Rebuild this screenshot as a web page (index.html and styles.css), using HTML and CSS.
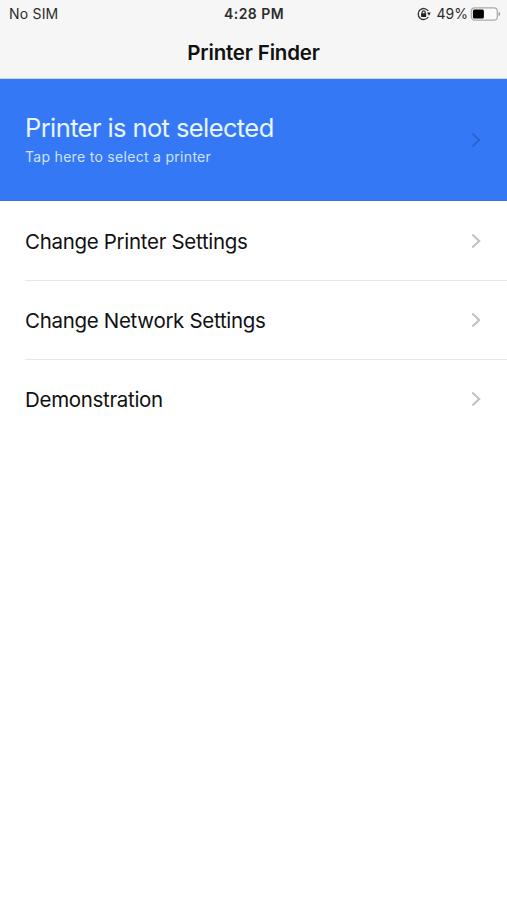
FILE: index.html
```html
<!DOCTYPE html>
<html lang="en">
<head>
<meta charset="utf-8">
<title>Printer Finder</title>
<link rel="stylesheet" href="styles.css">
</head>
<body>
<header class="header">
  <div class="status">
    <span class="carrier">No SIM</span>
    <span class="clock">4:28 PM</span>
    <span class="indicators">
      <svg class="lock" width="14" height="14" viewBox="0 0 14 14" fill="none" stroke="#333" stroke-width="1.3">
        <path d="M11.3 10A5.5 5.5 0 1 1 11.3 4"/>
        <path d="M10 5.6h3.8L12 8.8z" fill="#222" stroke="none"/>
        <path d="M5.1 6.7V5.5a1.55 1.55 0 0 1 3.1 0v1.2"/>
        <rect x="4.1" y="6.2" width="5.1" height="3.8" rx=".5" fill="#222" stroke="none"/>
      </svg>
      <span class="percent">49%</span>
      <svg class="battery" width="31" height="14" viewBox="0 0 31 14">
        <rect x="1.3" y=".9" width="26" height="12.2" rx="3.4" fill="#fafafa" stroke="#aaa" stroke-width="1.2"/>
        <rect x="2.9" y="2.4" width="11" height="9.2" rx="1.6" fill="#000"/>
        <path d="M28.6 4.8c2.1.8 2.1 3.6 0 4.4z" fill="#999"/>
      </svg>
    </span>
  </div>
  <h1 class="title">Printer Finder</h1>
</header>
<main>
  <a class="banner">
    <span class="banner-text">
      <span class="banner-title">Printer is not selected</span>
      <span class="banner-sub">Tap here to select a printer</span>
    </span>
    <svg class="chevron chevron-dark" width="10" height="16" viewBox="0 0 10 16"><path d="M1.3 1.5 8.2 8l-6.9 6.5"/></svg>
  </a>
  <nav class="list">
    <a class="row"><span class="label">Change Printer Settings</span><svg class="chevron" width="10" height="16" viewBox="0 0 10 16"><path d="M1.3 1.5 8.2 8l-6.9 6.5"/></svg></a>
    <a class="row"><span class="label">Change Network Settings</span><svg class="chevron" width="10" height="16" viewBox="0 0 10 16"><path d="M1.3 1.5 8.2 8l-6.9 6.5"/></svg></a>
    <a class="row"><span class="label">Demonstration</span><svg class="chevron" width="10" height="16" viewBox="0 0 10 16"><path d="M1.3 1.5 8.2 8l-6.9 6.5"/></svg></a>
  </nav>
</main>
</body>
</html>
```
FILE: styles.css
```css
* { box-sizing: border-box; }
body {
  margin: 0;
  min-height: 900px;
  background: #fff;
  color: #111;
  font-family: Inter, "Liberation Sans", sans-serif;
}
.header { height: 79px; background: #f6f6f6; border-bottom: 1px solid #cfd3dc; }
.status {
  display: grid;
  grid-template-columns: 1fr auto 1fr;
  align-items: center;
  height: 27px;
  padding: 0 6px 0 9px;
  font-size: 14px;
  line-height: 27px;
  color: #2c2c2c;
}
.carrier { letter-spacing: .2px; }
.clock { margin-right: 2px; font-weight: 600; letter-spacing: .45px; }
.indicators { display: flex; align-items: center; justify-content: flex-end; }
.percent { margin: 0 2px 0 6px; letter-spacing: 0; }
.title {
  margin: 0;
  text-align: center;
  font-size: 20.5px;
  font-weight: 600;
  line-height: 51px;
  letter-spacing: -.17px;
}
.banner {
  display: flex;
  align-items: center;
  justify-content: space-between;
  height: 122px;
  padding: 0 26px 0 25px;
  background: #3478f6;
  border-bottom: 1px solid #4272cf;
}
.banner-text { display: flex; flex-direction: column; padding-top: 2px; }
.banner-title { color: #e8f4ff; font-size: 25.5px; line-height: 32px; letter-spacing: -.6px; }
.banner-sub { color: #cfe3ff; font-size: 14px; line-height: 26px; letter-spacing: .3px; }
.chevron { flex: none; fill: none; stroke: #c2c2c4; stroke-width: 2.1; }
.chevron-dark { stroke: #2c65cf; }
.list { padding-left: 25px; }
.row {
  display: flex;
  align-items: center;
  justify-content: space-between;
  height: 79px;
  padding-right: 26px;
  font-size: 20.5px;
  line-height: 26px;
  letter-spacing: -.31px;
}
.row + .row { border-top: 1px solid #e8e8e8; }
.label { padding-top: 2px; }
```
